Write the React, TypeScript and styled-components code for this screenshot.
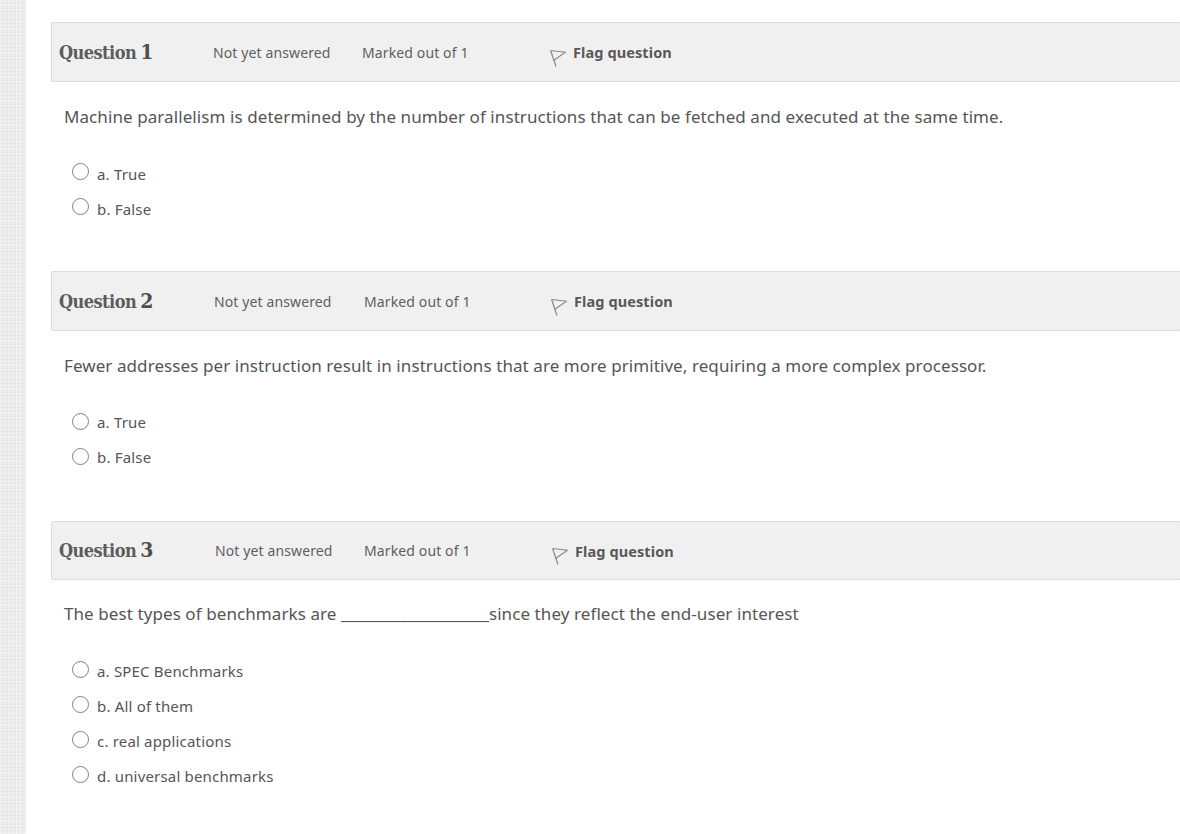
import React from "react";
import styled, { createGlobalStyle } from "styled-components";

const Global = createGlobalStyle`
  html, body { margin: 0; padding: 0; background: #fff; }
  body { font-family: "Noto Sans", "Open Sans", sans-serif; color: #555; overflow: hidden; }
`;

const Page = styled.div`
  display: flex;
  width: 1180px;
  height: 834px;
  overflow: hidden;
`;

const Rail = styled.div`
  width: 26px;
  flex: none;
  background-color: #ebebeb;
  background-image:
    repeating-linear-gradient(0deg, rgba(255,255,255,.4) 0 1px, transparent 1px 4px),
    repeating-linear-gradient(90deg, rgba(255,255,255,.4) 0 1px, transparent 1px 4px),
    repeating-linear-gradient(0deg, rgba(0,0,0,.025) 0 1px, transparent 1px 3px),
    repeating-linear-gradient(90deg, rgba(0,0,0,.025) 0 1px, transparent 1px 3px);
`;

const Main = styled.main`
  flex: 1;
  min-width: 0;
  padding: 22px 0 0 25px;
`;

const Question = styled.section<{ $height: number }>`
  height: ${(p) => p.$height}px;
`;

const Header = styled.header<{ $height: number }>`
  display: flex;
  align-items: center;
  height: ${(p) => p.$height}px;
  box-sizing: border-box;
  margin-right: -1px;
  padding-left: 7px;
  background: #f0f0f0;
  border: 1px solid #dcdcdc;
  border-radius: 2px;
`;

const Title = styled.h3<{ $width: number }>`
  width: ${(p) => p.$width}px;
  flex: none;
  margin: -2px 0 0;
  font-family: "DejaVu Serif", "Liberation Serif", serif;
  font-stretch: condensed;
  font-size: 18px;
  font-weight: 700;
  letter-spacing: -0.55px;
  color: #5c5c5c;
  span { font-size: 21px; color: #4f4f4f; margin-left: -1px; }
`;

const Meta = styled.span<{ $width: number }>`
  width: ${(p) => p.$width}px;
  flex: none;
  font-size: 14px;
  letter-spacing: 0.12px;
  color: #5f5f5f;
`;

const Flag = styled.a`
  display: flex;
  align-items: center;
  gap: 7px;
  font-size: 14.5px;
  font-weight: 700;
  letter-spacing: 0.1px;
  color: #585858;
  svg { margin-top: 11px; }
`;

const Prompt = styled.p<{ $top: number }>`
  margin: ${(p) => p.$top}px 0 0 13px;
  font-size: 17px;
  line-height: 24px;
  letter-spacing: 0.083px;
  color: #555;
`;

const Blank = styled.span`
  letter-spacing: -0.15px;
`;

const Answers = styled.div<{ $top: number }>`
  display: flex;
  flex-direction: column;
  gap: 11px;
  margin: ${(p) => p.$top}px 0 0 21px;
`;

const Answer = styled.label<{ $pad: number }>`
  display: flex;
  align-items: center;
  height: 24px;
  gap: 8px;
  padding-top: ${(p) => p.$pad}px;
  box-sizing: border-box;
  font-size: 15px;
  letter-spacing: 0.18px;
  color: #555;
`;

const Radio = styled.i<{ $shift: number }>`
  width: 15px;
  height: 15px;
  flex: none;
  margin-top: ${(p) => p.$shift}px;
  border: 1px solid #808080;
  border-radius: 50%;
  background: #fff;
`;

const FlagIcon = () => (
  <svg width="16" height="20" viewBox="0 0 16 20" fill="none" stroke="#888" strokeWidth="1.2">
    <path d="M0.6 2.5 L6 18.5" />
    <path d="M0.6 2.5 L15.5 4.2 L3.6 12.4" />
  </svg>
);

const data = [
  {
    n: 1, h: 249, hh: 60, tw: 154, sw: 149, mw: 188, pt: 23, at: 32, pad: 1, shift: -5,
    q: ["Machine parallelism is determined by the number of instructions that can be fetched and executed at the same time."],
    a: ["a. True", "b. False"],
  },
  {
    n: 2, h: 250, hh: 60, tw: 155, sw: 150, mw: 187, pt: 23, at: 32, pad: 0, shift: -2,
    q: ["Fewer addresses per instruction result in instructions that are more primitive, requiring a more complex processor."],
    a: ["a. True", "b. False"],
  },
  {
    n: 3, h: 300, hh: 59, tw: 156, sw: 149, mw: 188, pt: 22, at: 33, pad: 0, shift: -4,
    q: ["The best types of benchmarks are ", "since they reflect the end-user interest"],
    a: ["a. SPEC Benchmarks", "b. All of them", "c. real applications", "d. universal benchmarks"],
  },
];

export default function App() {
  return (
    <Page>
      <Global />
      <Rail />
      <Main>
        {data.map((d) => (
          <Question key={d.n} $height={d.h}>
            <Header $height={d.hh}>
              <Title $width={d.tw}>Question <span>{d.n}</span></Title>
              <Meta $width={d.sw}>Not yet answered</Meta>
              <Meta $width={d.mw}>Marked out of 1</Meta>
              <Flag><FlagIcon />Flag question</Flag>
            </Header>
            <Prompt $top={d.pt}>
              {d.q[0]}
              {d.q[1] && <><Blank>____________________</Blank>{d.q[1]}</>}
            </Prompt>
            <Answers $top={d.at}>
              {d.a.map((t) => (
                <Answer key={t} $pad={d.pad}><Radio $shift={d.shift} />{t}</Answer>
              ))}
            </Answers>
          </Question>
        ))}
      </Main>
    </Page>
  );
}
